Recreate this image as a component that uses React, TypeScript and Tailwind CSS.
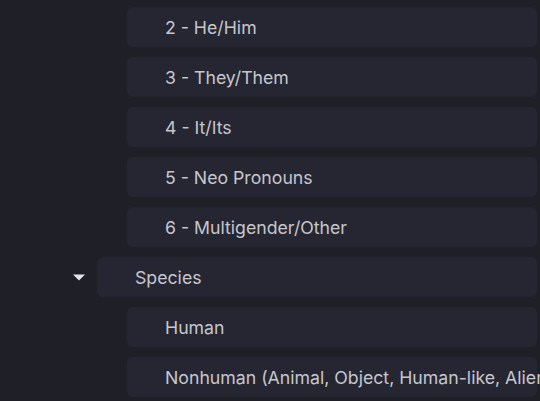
import React from 'react';

const pronouns = ['2 - He/Him', '3 - They/Them', '4 - It/Its', '5 - Neo Pronouns', '6 - Multigender/Other'];
const species = ['Human', 'Nonhuman (Animal, Object, Human-like, Alien'];

const Row: React.FC<{ label: string }> = ({ label }) => (
  <div className="ml-[127px] w-[410px] h-[40px] rounded-[6px] bg-[#252632] flex items-center pl-[38px] pt-[3px] whitespace-nowrap">
    <span className="text-[17.7px] text-[#c6c7cd]">{label}</span>
  </div>
);

export default function App() {
  return (
    <div
      className="h-[401px] w-[540px] overflow-hidden bg-[#1e1f27] pt-[7px] flex flex-col gap-[10px]"
      style={{ fontFamily: 'Inter, "Noto Sans", sans-serif' }}
    >
      {pronouns.map((p) => (
        <Row key={p} label={p} />
      ))}
      <div className="flex items-center h-[40px]">
        <div className="w-[97px] flex justify-end pr-[12px]">
          <svg width="12" height="7" viewBox="0 0 12 7">
            <path d="M0 0.5 L12 0.5 L6 6.5 Z" fill="#e4e5ea" />
          </svg>
        </div>
        <div className="w-[440px] h-[40px] rounded-[6px] bg-[#252632] flex items-center pl-[38px] pt-[3px]">
          <span className="text-[17.7px] text-[#c6c7cd]">Species</span>
        </div>
      </div>
      {species.map((s) => (
        <Row key={s} label={s} />
      ))}
    </div>
  );
}
